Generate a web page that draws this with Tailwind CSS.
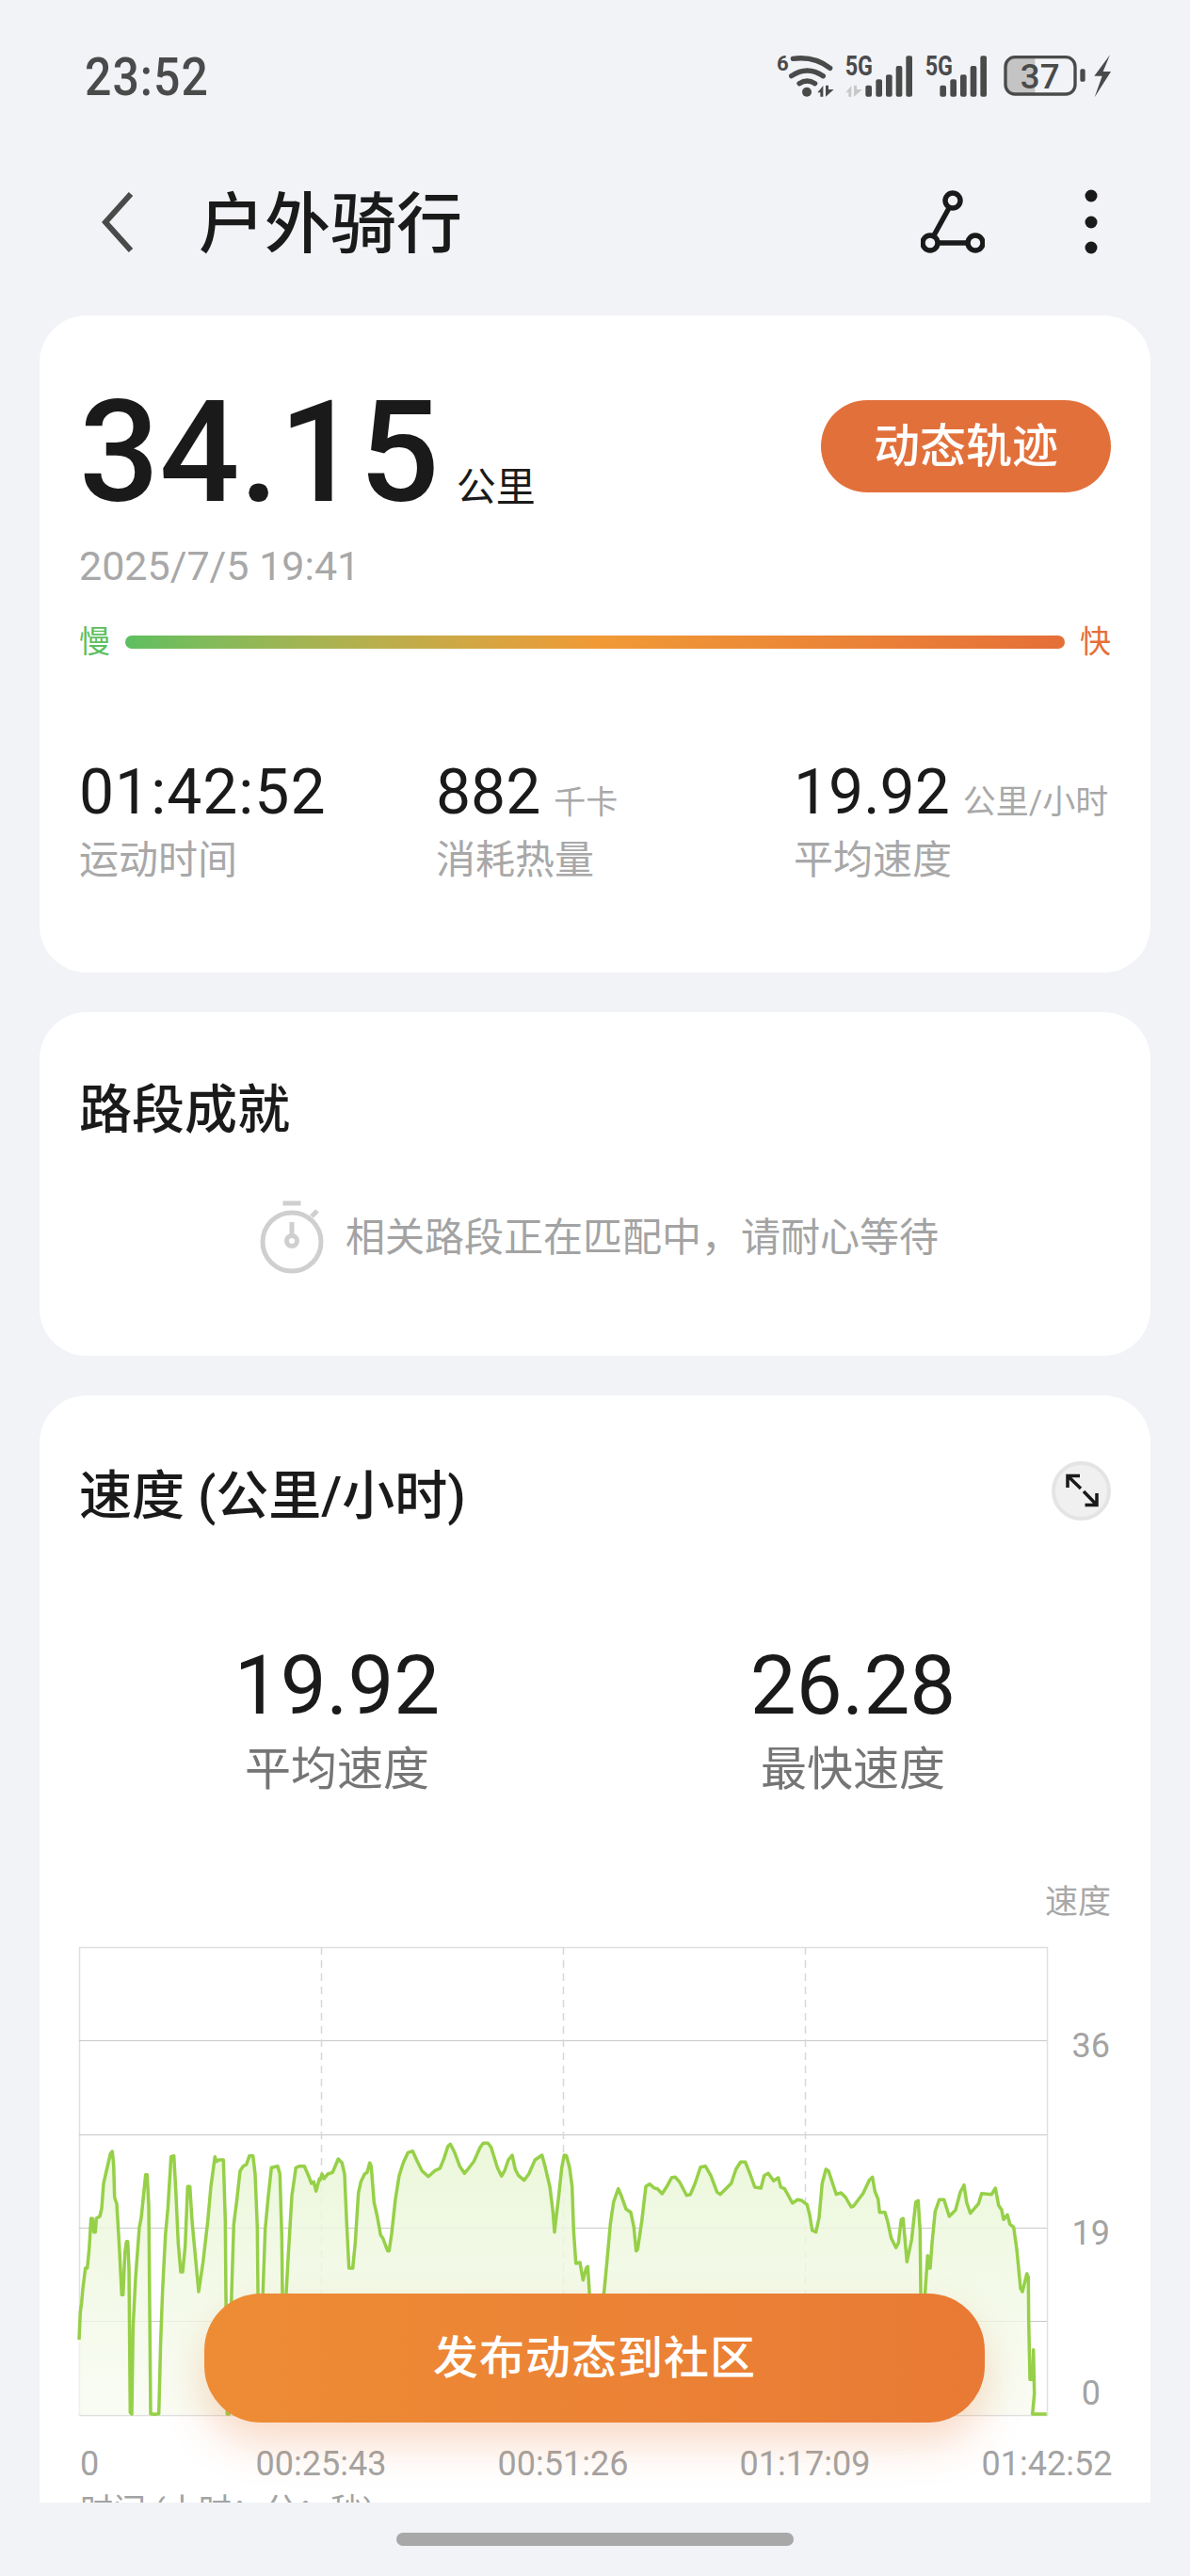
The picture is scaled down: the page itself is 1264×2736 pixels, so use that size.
<!DOCTYPE html>
<html lang="zh-CN">
  <head>
    <meta charset="UTF-8" />
    <title>户外骑行</title>
    <script src="https://cdn.jsdelivr.net/npm/@tailwindcss/browser@4"></script>
  </head>
  <body class="bg-[#f1f3f7] font-['Roboto','Noto_Sans_CJK_SC',sans-serif] text-[#1a1a1a]">
    <div class="flex h-[2736px] w-[1264px] flex-col overflow-hidden">
      <!-- Status bar -->
      <div class="mt-[30px] flex h-[100px] items-center justify-between pr-[44px] pl-[90px]">
        <span class="mt-[3px] scale-y-110 text-[50px] leading-none font-medium tracking-[1px] text-[#4a4a4a]">23:52</span>
        <svg class="h-[100px] w-[440px]" viewBox="0 0 1320 300" fill="#4a4a4a">
          <text x="135" y="135" font-size="68" font-weight="700" textLength="38" lengthAdjust="spacingAndGlyphs">6</text>
          <path d="M187 97Q255 88 305 127" fill="none" stroke="#4a4a4a" stroke-width="16" stroke-linecap="round" />
          <path d="M182 152Q232 118 283 152" fill="none" stroke="#4a4a4a" stroke-width="16" stroke-linecap="round" />
          <path d="M207 176Q232 160 257 176" fill="none" stroke="#4a4a4a" stroke-width="16" stroke-linecap="round" />
          <circle cx="231" cy="203" r="15" />
          <path d="M265 205L283 183V218H274V205ZM291 182H300V195L317 195L291 218Z" />
          <text x="353" y="150" font-size="86" font-weight="700" textLength="88" lengthAdjust="spacingAndGlyphs">5G</text>
          <path d="M355 205L373 183V218H364V205ZM381 182H390V195L408 195L381 218Z" fill="#c8c8c8" />
          <rect x="418" y="182" width="20" height="36" rx="6" />
          <rect x="451" y="163" width="20" height="55" rx="6" />
          <rect x="483" y="148" width="20" height="70" rx="6" />
          <rect x="515" y="120" width="20" height="98" rx="6" />
          <rect x="547" y="88" width="20" height="130" rx="6" />
          <text x="608" y="150" font-size="86" font-weight="700" textLength="88" lengthAdjust="spacingAndGlyphs">5G</text>
          <rect x="655" y="182" width="20" height="36" rx="6" />
          <rect x="688" y="163" width="20" height="55" rx="6" />
          <rect x="720" y="148" width="20" height="70" rx="6" />
          <rect x="752" y="120" width="20" height="98" rx="6" />
          <rect x="784" y="88" width="20" height="130" rx="6" />
          <path d="M894 93H958V208H894Q865 208 865 180V121Q865 93 894 93Z" fill="#c4c4c4" />
          <rect x="864" y="92" width="222" height="118" rx="30" fill="none" stroke="#4a4a4a" stroke-width="10" />
          <text x="974" y="192" font-size="110" font-weight="500" text-anchor="middle">37</text>
          <rect x="1102" y="130" width="16" height="40" rx="5" />
          <path d="M1197 85L1147 152H1172L1148 220L1200 138H1175Z" />
        </svg>
      </div>

      <!-- Title bar -->
      <div class="mt-[36px] flex h-[140px] items-center pr-[95px] pl-[108px]">
        <svg class="h-[66px] w-[34px]" viewBox="0 0 34 66" fill="none" stroke="#4a4a4a" stroke-width="6">
          <path d="M31 3L4 33L31 63" />
        </svg>
        <h1 class="mt-[5px] ml-[69px] flex-1 text-[70px] leading-none font-medium">户外骑行</h1>
        <svg class="h-[70px] w-[68px]" viewBox="0 0 68 70" fill="none" stroke="#1a1a1a" stroke-width="5.5">
          <circle cx="34" cy="12" r="8" />
          <circle cx="10" cy="57" r="8" />
          <circle cx="58" cy="57" r="8" />
          <path d="M30 20L14 49M18 57H50" />
        </svg>
        <svg class="ml-[103px] h-[76px] w-[20px]" viewBox="0 0 20 76" fill="#1a1a1a">
          <circle cx="10" cy="10" r="6.5" />
          <circle cx="10" cy="38" r="6.5" />
          <circle cx="10" cy="65" r="6.5" />
        </svg>
      </div>

      <!-- Summary card -->
      <section class="mx-[42px] mt-[29px] h-[698px] rounded-[50px] bg-white pt-[71px] pr-[42px] pl-[42px]">
        <div class="flex items-start justify-between">
          <div class="flex items-baseline gap-[18px]">
            <span class="text-[150px] leading-none font-medium">34.15</span>
            <span class="text-[42px] leading-none">公里</span>
          </div>
          <button class="mt-[19px] h-[98px] w-[308px] rounded-full bg-[#e2703b] pt-[2px] text-[49px] font-medium text-white">动态轨迹</button>
        </div>
        <p class="mt-[24px] text-[43px] leading-none text-[#a8a8a8]">2025/7/5 19:41</p>
        <div class="mt-[42px] flex items-center gap-[16px]">
          <span class="text-[33px] leading-none text-[#5cbf60]">慢</span>
          <div class="h-[14px] flex-1 rounded-full bg-gradient-to-r from-[#5cbf60] via-[#f09a36] to-[#e56f38]"></div>
          <span class="text-[33px] leading-none text-[#e56f38]">快</span>
        </div>
        <div class="mt-[111px] grid grid-cols-[379px_380px_1fr]">
          <div>
            <div class="text-[66px] leading-none tracking-[1px]">01:42:52</div>
            <div class="mt-[18px] text-[42px] leading-none text-[#a8a8a8]">运动时间</div>
          </div>
          <div>
            <div class="flex items-baseline gap-[14px]">
              <span class="text-[66px] leading-none">882</span>
              <span class="text-[34px] leading-none text-[#a8a8a8]">千卡</span>
            </div>
            <div class="mt-[18px] text-[42px] leading-none text-[#a8a8a8]">消耗热量</div>
          </div>
          <div>
            <div class="flex items-baseline gap-[14px]">
              <span class="text-[66px] leading-none">19.92</span>
              <span class="text-[35px] leading-none whitespace-nowrap text-[#a8a8a8]">公里/小时</span>
            </div>
            <div class="mt-[18px] text-[42px] leading-none text-[#a8a8a8]">平均速度</div>
          </div>
        </div>
      </section>

      <!-- Segment achievements -->
      <section class="mx-[42px] mt-[42px] h-[365px] rounded-[50px] bg-white pt-[76px] pl-[42px]">
        <h2 class="text-[56px] leading-none font-medium">路段成就</h2>
        <div class="mt-[68px] flex h-[80px] items-center gap-[23px] pl-[192px]">
          <svg class="h-[80px] w-[68px]" viewBox="276 1274 68 80" fill="none" stroke="#cfcfcf" stroke-width="5">
            <circle cx="310" cy="1318" r="31" />
            <path d="M300.5 1277H319.5M331 1291L337 1285M310 1297V1310" />
            <circle cx="310" cy="1317" r="5.5" />
          </svg>
          <span class="text-[42px] leading-none whitespace-nowrap text-[#a3a3a3]">相关路段正在匹配中，请耐心等待</span>
        </div>
      </section>

      <!-- Speed card -->
      <section class="relative mx-[42px] mt-[42px] min-h-0 flex-1 overflow-hidden rounded-t-[50px] bg-white pt-[70px] pr-[42px] pl-[42px]">
        <div class="flex h-[63px] items-center justify-between">
          <h2 class="mt-[11px] text-[56px] leading-none font-medium">速度 (公里/小时)</h2>
          <div class="flex size-[63px] items-center justify-center rounded-full border-[4px] border-[#e4e4e4] bg-[#f0f0f0]">
            <svg class="size-[42px]" viewBox="1127 1563 42 42" fill="none" stroke="#1a1a1a" stroke-width="3.5">
              <path d="M1146 1567.5H1133V1580M1133 1567.5L1147 1581" />
              <path d="M1151.5 1598.5H1164V1586M1164 1598.5L1150 1584" />
            </svg>
          </div>
        </div>
        <div class="mt-[132px] grid grid-cols-2 text-center">
          <div>
            <div class="text-[87px] leading-none">19.92</div>
            <div class="mt-[21px] text-[49px] leading-none text-[#757575]">平均速度</div>
          </div>
          <div>
            <div class="text-[87px] leading-none">26.28</div>
            <div class="mt-[21px] text-[49px] leading-none text-[#757575]">最快速度</div>
          </div>
        </div>
        <div class="mt-[99px] text-right text-[35px] leading-none text-[#a8a8a8]">速度</div>
        <svg class="mt-[21px] -ml-[4px] block h-[600px] w-[1110px] max-w-none" viewBox="80 2060 1110 600">
          <defs>
            <linearGradient id="speedFill" x1="0" y1="0" x2="0" y2="1">
              <stop offset="0" stop-color="#e9f6d6" stop-opacity="0.9" />
              <stop offset="1" stop-color="#f7fbef" stop-opacity="0.7" />
            </linearGradient>
          </defs>
          <rect x="84.5" y="2069.5" width="1028" height="497" fill="none" stroke="#e0e0e0" stroke-width="1.5" />
          <path d="M84 2168.5H1112M84 2268.5H1112M84 2367.5H1112M84 2466.5H1112" stroke="#c8c8c8" stroke-width="1" />
          <path d="M341.5 2069V2566M598.5 2069V2566M855.5 2069V2566" stroke="#d8d8d8" stroke-width="1.5" stroke-dasharray="8 6" />
          <path id="speedArea" fill="url(#speedFill)" />
          <path id="speedLine" fill="none" stroke="#96d048" stroke-width="3.5" stroke-linejoin="round" />
          <g class="fill-[#a3a3a3] text-[36px]">
            <text x="1179" y="2186" text-anchor="end">36</text>
            <text x="1179" y="2385" text-anchor="end">19</text>
            <text x="1169" y="2555" text-anchor="end">0</text>
            <text x="85" y="2630">0</text>
            <text x="341" y="2630" text-anchor="middle">00:25:43</text>
            <text x="598" y="2630" text-anchor="middle">00:51:26</text>
            <text x="855" y="2630" text-anchor="middle">01:17:09</text>
            <text x="1112" y="2630" text-anchor="middle">01:42:52</text>
            <text x="85" y="2680" class="text-[35px]">时间 (小时：分：秒)</text>
          </g>
        </svg>
        <button class="absolute top-[954px] left-[175px] h-[137px] w-[829px] rounded-[60px] bg-gradient-to-r from-[#ee8c35] to-[#e97a35] text-[48px] font-medium tracking-[1px] text-white shadow-[0_22px_44px_rgba(233,122,53,0.28)]">发布动态到社区</button>
      </section>

      <!-- Home indicator -->
      <div class="h-[78px] pt-[32px]">
        <div class="mx-auto h-[14px] w-[422px] rounded-full bg-[#a8a8a8]"></div>
      </div>
    </div>

    <script>
      // speed curve, traced from crops at 3x: [crop x origin, x,y, x,y, ...]
      const segments = [
        [80, 12,678,16,590,20,560,24,515,32,450,38,450,44,390,50,292,55,292,59,335,64,335,67,292,78,285,84,260,90,180,97,150,112,85,118,78,122,120,125,225,132,245,140,380,148,535,152,535,158,400,163,365,167,365,171,450,175,910,180,915,184,640,192,480,204,320,210,290,224,152,229,152,234,250,240,914,252,916,266,914,272,680,278,520,287,345,295,260,305,95,314,92,320,200,328,370,336,462,342,462,350,380,358,190,365,190,372,300,393,525,407,430,422,300,432,190,445,95,450,110,458,105,472,105,478,300,480,540,484,915,490,915,498,530,505,310,515,230,525,140,535,125,545,120,555,92,566,92,573,150,580,320,582,525,588,800,594,800,598,525,605,325,615,220,625,130,645,125,652,150,658,350,660,530,667,700,672,530,678,420,690,220,703,130,715,125,730,125,745,160,752,180,760,175,767,205,778,165],
        [340, 0,170,6,150,12,165,25,150,40,145,58,102,70,115,78,150,85,310,92,450,104,450,112,370,122,210,130,175,142,150,150,145,158,115,163,125,172,240,182,285,193,345,200,355,215,395,220,395,228,340,240,230,252,155,265,115,280,82,295,77,310,110,325,140,345,158,365,140,382,132,395,100,407,62,415,55,428,80,445,125,460,148,475,130,490,110,510,65,520,52,535,52,545,65,565,130,578,157,588,140,600,105,612,90,622,135,632,155,650,170,665,150,685,105,695,98,707,90,718,130,732,190,742,270,747,335,752,290,760,225,770,130,778,90,785,92,795,130,803,190,808,330,815,435,828,432,838,488,848,450,853,445,858,525,862,700],
        [640, 5,525,15,420,25,310,35,240,50,197,60,220,75,262,90,272,100,320,107,395,112,390,125,300,138,190,150,182,165,195,175,197,190,213,205,190,220,162,232,160,245,175,268,218,280,215,295,180,312,128,328,125,345,155,365,208,375,215,395,195,410,180,425,135,440,112,455,112,470,150,485,192,505,195,515,155,528,148,545,172,560,162,568,192,580,197,590,215,605,243,622,232,635,235,652,248,660,280,668,330,680,335,690,290,700,180,712,135,720,140,745,215,760,210,775,225,792,255,800,252,830,212,850,170,860,160,868,205,878,230,883,272,900,272],
        [900, 128,300,140,355,155,385,163,370,172,295,178,292,190,430,205,360,218,240,226,235,232,330,234,525,240,700,248,525,256,410,258,450,264,450,270,370,280,270,293,232,308,232,325,285,345,265,360,208,372,185,380,240,392,275,405,260,418,245,428,212,460,215,472,195,482,250,492,265,498,295,510,280,518,310,530,320,540,390,552,515,558,525,572,468,577,480,578,620,582,805,590,805,593,710,596,850,590,915,605,915,635,915],
      ];
      const points = [];
      segments.forEach((seg) => {
        for (let i = 1; i < seg.length; i += 2) {
          points.push([seg[0] + seg[i] / 3, 2260 + seg[i + 1] / 3]);
        }
      });
      const line = points.map((p) => p[0].toFixed(1) + " " + p[1].toFixed(1)).join("L");
      document.getElementById("speedLine").setAttribute("d", "M" + line);
      document.getElementById("speedArea").setAttribute("d", "M84 2566L" + line + "L1112 2566Z");
    </script>
  </body>
</html>
